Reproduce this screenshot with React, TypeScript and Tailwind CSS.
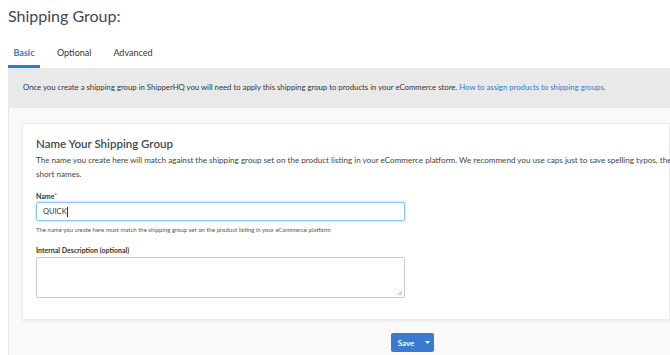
export default function App() {
  return (
    <div className="w-[670px] h-[355px] overflow-hidden bg-white font-['Lato',sans-serif] text-[#333c48]">
      <h1 className="pl-2 pt-[5px] text-[16px] leading-[22px] text-[#3d4853]">Shipping Group:</h1>

      <div className="mt-[20px] ml-2 flex text-[9px] leading-[11px]">
        <div className="w-8 flex justify-center pb-[7px] border-b-[3px] border-[#2f7bd0] font-bold text-[#2f7bd0]">Basic</div>
        <div className="ml-[17px] pb-[7px] text-[#333]">Optional</div>
        <div className="ml-[22px] pb-[7px] text-[#333]">Advanced</div>
      </div>

      <div className="ml-2 bg-[#e9e9e9] h-[40px] flex items-center pl-[15px] text-[7.75px] whitespace-nowrap text-[#333]">
        Once you create a shipping group in ShipperHQ you will need to apply this shipping group to products in your eCommerce store.&nbsp;
        <span className="text-[#2f7bd0]">How to assign products to shipping groups.</span>
      </div>

      <div className="ml-2 border-l border-[#e3e3e3] bg-[#f9f9f9] pt-[15px] pl-[13px] h-[250px]">
        <div className="bg-white border border-[#ebebeb] shadow-[0_1px_2px_rgba(0,0,0,0.08)] h-[197px] pl-[13px] pt-[11px]">
          <h2 className="text-[11.5px] leading-[18px] font-semibold text-[#3d4853]">Name Your Shipping Group</h2>
          <p className="text-[8.1px] leading-[14px] text-[#444] whitespace-nowrap">
            The name you create here will match against the shipping group set on the product listing in your eCommerce platform. We recommend you use caps just to save spelling typos, they are often
          </p>
          <p className="text-[8.1px] leading-[14px] text-[#444]">short names.</p>

          <label className="block mt-[10px] text-[7px] leading-[10px] font-bold text-[#333]">
            Name<span className="text-[#d9534f]">*</span>
          </label>
          <div className="mt-[1px] w-[369px] h-[19px] border border-[#8cc4f2] rounded-[2px] shadow-[0_0_3px_rgba(102,175,233,0.6)] flex items-center pl-[6px] text-[7.5px] text-[#333]">
            QUICK<span className="w-px h-[10px] bg-[#333]" />
          </div>
          <p className="mt-[4px] text-[6px] leading-[9px] text-[#555]">
            The name you create here must match the shipping group set on the product listing in your eCommerce platform
          </p>

          <label className="block mt-[11px] text-[7px] leading-[10px] font-bold text-[#333]">Internal Description (optional)</label>
          <div className="relative mt-[2px] w-[369px] h-[41px] border border-[#ccc] rounded-[2px]">
            <svg className="absolute right-[1px] bottom-[1px]" width="6" height="6" viewBox="0 0 6 6">
              <path d="M5 1 L1 5 M5 3 L3 5" stroke="#999" strokeWidth="0.8" />
            </svg>
          </div>
        </div>

        <div className="mt-[13px] flex">
          <div className="ml-[369px] flex h-[19px] rounded-[2px] bg-[#3a7ad0] text-white text-[8px] font-bold">
            <div className="w-[30px] flex items-center justify-center">Save</div>
            <div className="w-[13px] flex items-center justify-center">
              <svg width="5" height="3" viewBox="0 0 5 3"><path d="M0 0 L5 0 L2.5 3 Z" fill="#fff" /></svg>
            </div>
          </div>
        </div>
      </div>
    </div>
  );
}
